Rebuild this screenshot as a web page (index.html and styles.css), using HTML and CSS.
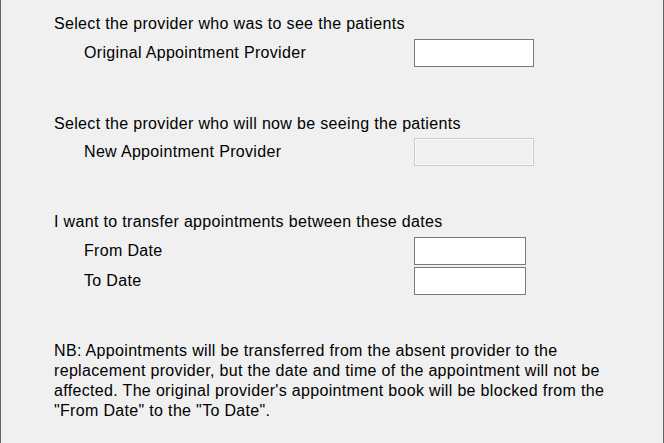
FILE: index.html
```
<!DOCTYPE html>
<html lang="en">
<head>
<meta charset="utf-8">
<title>Transfer Appointments</title>
<link rel="stylesheet" href="styles.css">
</head>
<body>
<div class="window">
  <section class="group">
    <p class="heading">Select the provider who was to see the patients</p>
    <div class="field">
      <label class="label" for="orig">Original Appointment Provider</label>
      <input class="box" id="orig" type="text">
    </div>
  </section>
  <section class="group group-2">
    <p class="heading heading-tight">Select the provider who will now be seeing the patients</p>
    <div class="field">
      <label class="label" for="newp">New Appointment Provider</label>
      <input class="box box-disabled" id="newp" type="text" disabled>
    </div>
  </section>
  <section class="group group-3">
    <p class="heading">I want to transfer appointments between these dates</p>
    <div class="field">
      <label class="label" for="from">From Date</label>
      <input class="box box-date" id="from" type="text">
    </div>
    <div class="field field-next">
      <label class="label" for="to">To Date</label>
      <input class="box box-date" id="to" type="text">
    </div>
  </section>
  <p class="note">NB: Appointments will be transferred from the absent provider to the<br>replacement provider, but the date and time of the appointment will not be<br>affected. The original provider's appointment book will be blocked from the<br>"From Date" to the "To Date".</p>
</div>
</body>
</html>
```
FILE: styles.css
```
html, body {
  margin: 0;
  padding: 0;
  background: #f0f0f0;
}

.window {
  box-sizing: border-box;
  width: 664px;
  height: 443px;
  border-left: 1px solid #646464;
  border-right: 1px solid #646464;
  background: #f0f0f0;
  padding: 14px 0 0 53px;
  font-family: "Liberation Sans", Arial, sans-serif;
  font-size: 16px;
  letter-spacing: 0.33px;
  line-height: 20px;
  color: #000;
  overflow: hidden;
}

.group {
  display: flex;
  flex-direction: column;
}

.group-2 {
  margin-top: 47px;
}

.group-3 {
  margin-top: 46px;
}

.heading {
  margin: 0 0 5px 0;
}

.heading-tight {
  margin-bottom: 4px;
}

.field {
  display: grid;
  grid-template-columns: 330px auto;
  align-items: center;
  margin-left: 30px;
}

.field-next {
  margin-top: 2px;
}

.label {
  display: block;
}

.box {
  appearance: none;
  -webkit-appearance: none;
  box-sizing: border-box;
  width: 120px;
  height: 28px;
  margin: 0;
  padding: 0;
  border: 1px solid #7a7a7a;
  border-radius: 0;
  background: #fff;
  font: inherit;
  outline: none;
}

.box-date {
  width: 112px;
}

.box-disabled {
  border-color: #cccccc;
  background: #f0f0f0;
  box-shadow: inset 0 0 0 1px #f9f9f9;
}

.note {
  margin: 46px 0 0 0;
}
```
